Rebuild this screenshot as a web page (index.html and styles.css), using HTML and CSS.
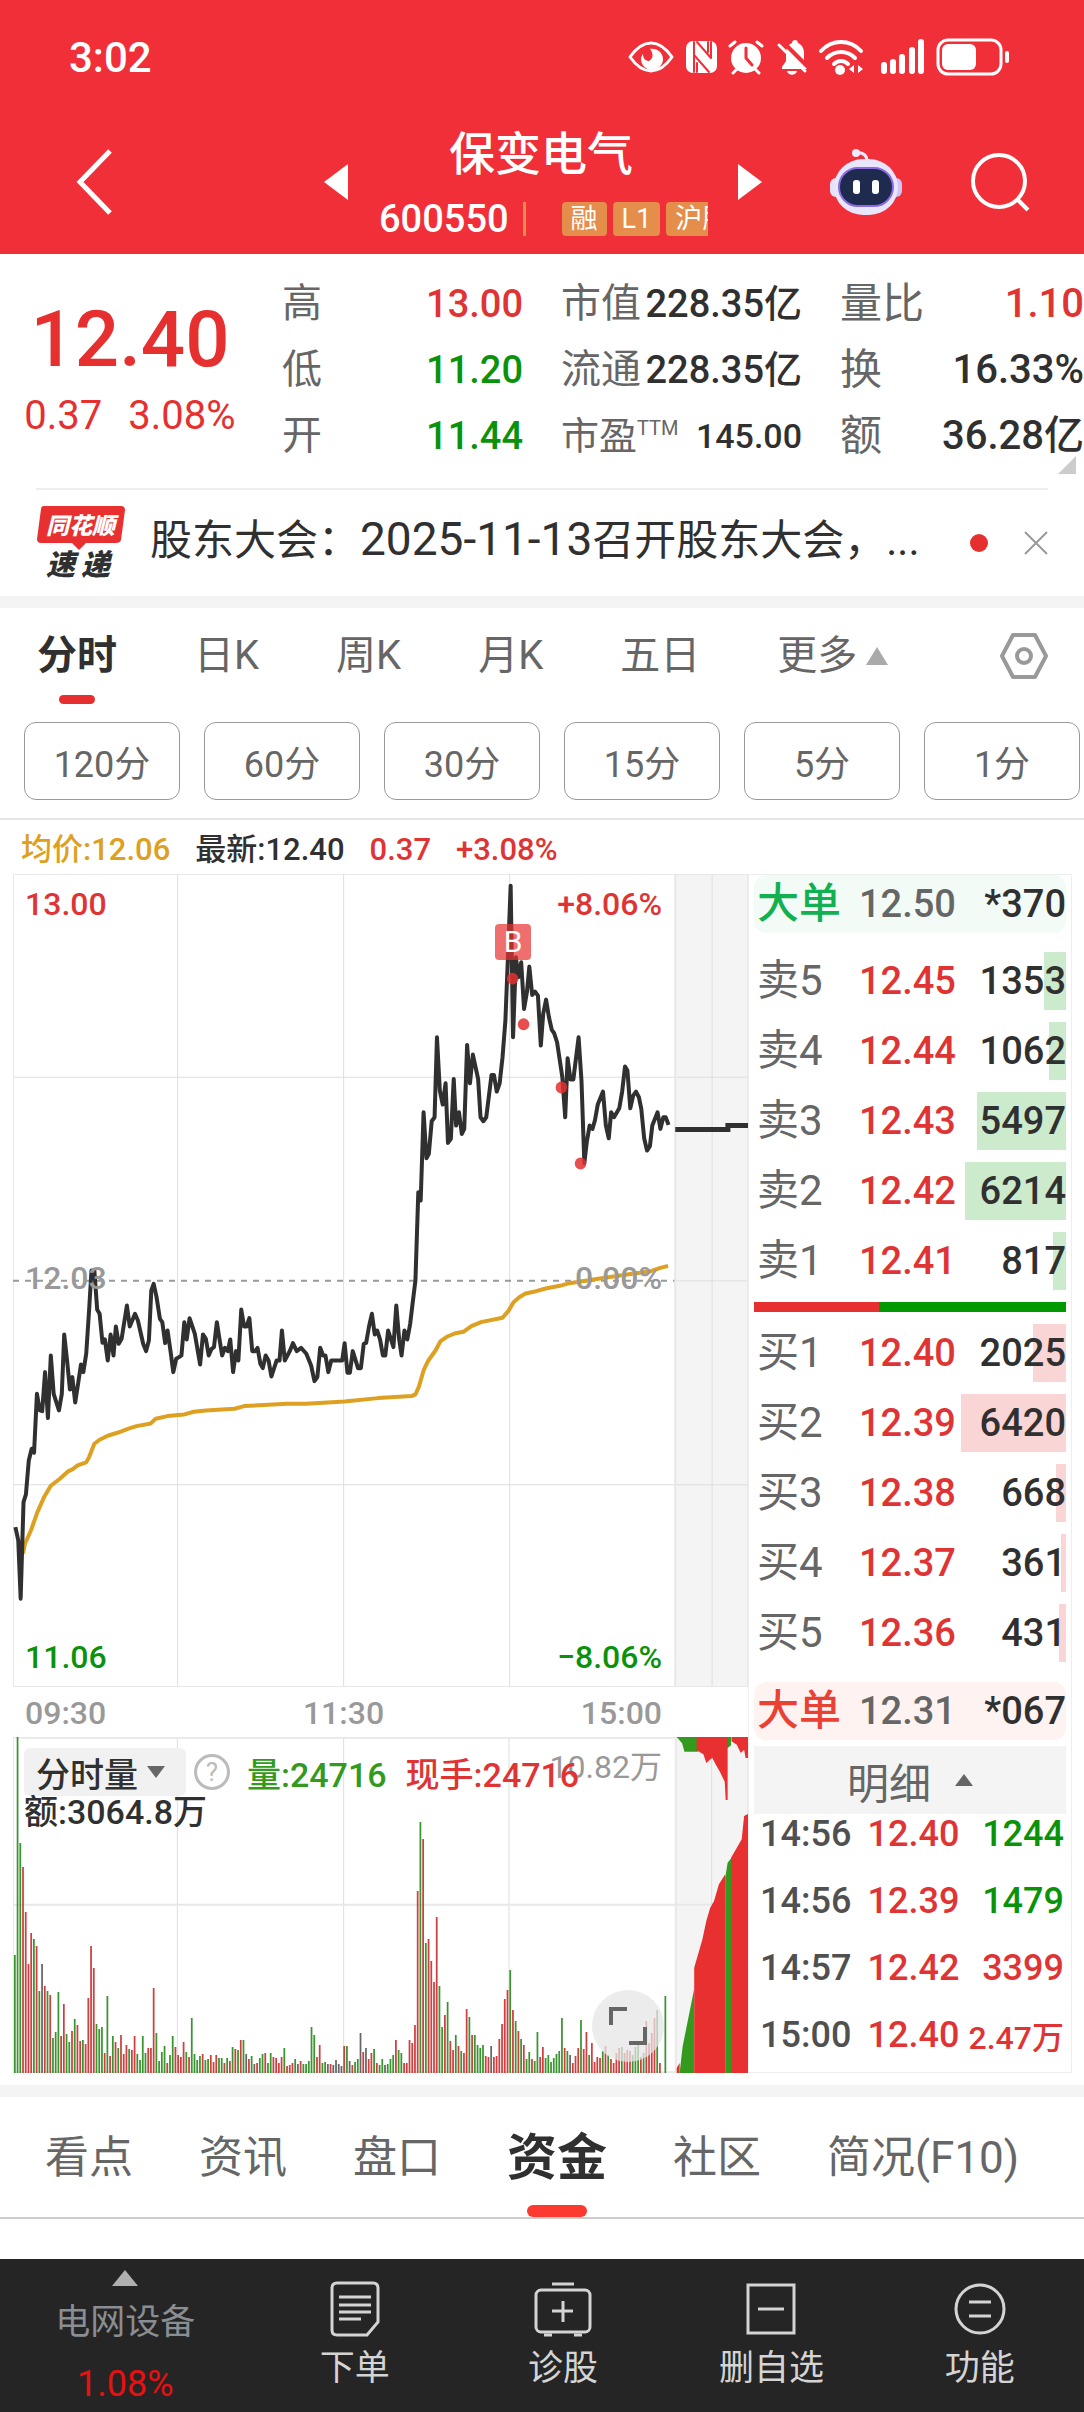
FILE: index.html
```html
<!DOCTYPE html>
<html lang="zh-CN">
<head>
	<meta charset="UTF-8">
	<meta name="viewport" content="width=device-width, initial-scale=1">
	<title>保变电气 600550</title>
	<link rel="stylesheet" href="styles.css">
</head>
<body>
	<header class="header">
		<div class="status">
			<span class="clock">3:02</span>
			<svg class="status-icons" width="386" height="40" viewBox="0 0 386 40" fill="none" stroke="#fff" stroke-width="3" stroke-linecap="round" stroke-linejoin="round">
				<!-- eye -->
				<path d="M2 20C9 10 16 6 23 6s14 4 21 14c-7 10-14 14-21 14S9 30 2 20z"/>
				<path d="M22 12c7-1 13 4 13 10s-5 11-11 11-11-5-11-11c0-2 1-4 2-5 0 5 3 7 6 7 4-2 5-7 1-12z" fill="#fff" stroke="none"/>
				<!-- nfc -->
				<rect x="58" y="4" width="31" height="32" rx="7" fill="#fff" stroke="none"/>
				<path d="M66 5v30M69 5l14 16V5M66 18l15 17M69 26v9M80 5v10" stroke="#f12f38" stroke-width="2"/>
				<!-- alarm -->
				<circle cx="118" cy="21" r="15" fill="#fff" stroke="none"/>
				<path d="M102 9l5-4M134 9l-5-4M109 32l-4 4M127 32l4 4"/>
				<path d="M118 11v10l6 7" stroke="#f12f38"/>
				<!-- bell off -->
				<path d="M154 32v-2l4-6V17c0-8 4-10 6-11 0-4 6-4 6 0 4 2 6 5 6 11v7l4 8zM159 34h10c-1 5-9 5-10 0z" fill="#fff" stroke="none"/>
				<path d="M155 5l26 26" stroke="#f12f38" stroke-width="4"/>
				<path d="M151 8l26 26"/>
				<!-- wifi -->
				<path d="M193 14c11-12 29-12 40 0M199 21c8-8 20-8 28 0M206 27c4-4 10-4 14 0" stroke-width="4"/>
				<circle cx="212" cy="33" r="5" fill="#fff" stroke="none"/>
				<path d="M226 28v8l-5-4zM230 28v8l5-4z" fill="#fff" stroke="none"/>
				<!-- signal -->
				<path d="M256 28v6M265 25v9M274 20v14M284 13v21M293 5v29" stroke-width="6"/>
				<!-- battery -->
				<rect x="310" y="3" width="63" height="34" rx="10"/>
				<rect x="314" y="7" width="34" height="26" rx="6" fill="#fff" stroke="none"/>
				<path d="M379 16v8" stroke-width="4"/>
			</svg>
		</div>
		<div class="title-bar">
			<button class="icon-btn back" aria-label="返回">
				<svg width="38" height="66" viewBox="0 0 38 66" fill="none" stroke="#fff" stroke-width="5"><path d="M35 2L5 33l30 31"/></svg>
			</button>
			<button class="icon-btn" aria-label="上一只">
				<svg width="24" height="36"><path d="M24 0v36L0 18z" fill="#fff"/></svg>
			</button>
			<div class="stock">
				<h1>保变电气</h1>
				<div class="stock-sub">
					<span class="code">600550</span>
					<i class="bar"></i>
					<span class="tags"><b>融</b><b>L1</b><b>沪股通</b></span>
				</div>
			</div>
			<button class="icon-btn" aria-label="下一只">
				<svg width="24" height="36"><path d="M0 0v36l24-18z" fill="#fff"/></svg>
			</button>
			<button class="icon-btn robot" aria-label="智能助手">
				<svg width="72" height="66" viewBox="0 0 72 66">
					<path d="M26 4c8-1 11 3 11 8" fill="none" stroke="#efeafc" stroke-width="3"/>
					<circle cx="26" cy="4" r="4" fill="#efeafc"/>
					<rect x="0" y="29" width="12" height="19" rx="6" fill="#e6e0fa"/>
					<rect x="60" y="29" width="12" height="19" rx="6" fill="#cfc4f4"/>
					<rect x="4" y="10" width="64" height="56" rx="29" fill="#e9e5fb"/>
					<rect x="9" y="19" width="54" height="38" rx="19" fill="#1f2a4f" stroke="#8a6be0" stroke-width="2"/>
					<rect x="23" y="31" width="7" height="14" rx="3" fill="#fff"/>
					<rect x="42" y="31" width="7" height="14" rx="3" fill="#fff"/>
				</svg>
			</button>
			<button class="icon-btn search" aria-label="搜索">
				<svg width="60" height="60" viewBox="0 0 60 60" fill="none" stroke="#fff" stroke-width="4"><circle cx="29" cy="29" r="26"/><path d="M48 48l10 10"/></svg>
			</button>
		</div>
	</header>

	<section class="quote">
		<div class="price">
			<strong>12.40</strong>
			<p><span>0.37</span><span>3.08%</span></p>
		</div>
		<dl>
			<div><dt>高</dt><dd class="up">13.00</dd></div>
			<div><dt>低</dt><dd class="down">11.20</dd></div>
			<div><dt>开</dt><dd class="down">11.44</dd></div>
		</dl>
		<dl>
			<div><dt>市值</dt><dd>228.35亿</dd></div>
			<div><dt>流通</dt><dd>228.35亿</dd></div>
			<div class="small"><dt>市盈<sup>TTM</sup></dt><dd>145.00</dd></div>
		</dl>
		<dl class="wide">
			<div><dt>量比</dt><dd class="up">1.10</dd></div>
			<div><dt>换</dt><dd>16.33%</dd></div>
			<div><dt>额</dt><dd>36.28亿</dd></div>
		</dl>
		<i class="corner"></i>
	</section>

	<section class="news">
		<svg class="news-logo" width="90" height="76" viewBox="0 0 90 76">
			<path d="M8 1h77q4 0 4 4l-4 30q-1 3-5 3H50l-7 7-7-7H5q-4 0-4-4L5 4q0-3 3-3z" fill="#e83030"/>
			<text x="10" y="29" class="logo-top">同花顺</text>
			<text x="10" y="70" class="logo-bottom">速</text>
			<text x="45" y="70" class="logo-bottom">递</text>
		</svg>
		<a href="#" class="news-text">股东大会：<span>2025-11-13</span>召开股东大会，...</a>
		<i class="dot"></i>
		<button class="icon-btn" aria-label="关闭">
			<svg width="24" height="24" fill="none" stroke="#999" stroke-width="2"><path d="M1 1l22 22M23 1L1 23"/></svg>
		</button>
	</section>

	<nav class="period">
		<a href="#" class="active">分时</a>
		<a href="#">日K</a>
		<a href="#">周K</a>
		<a href="#">月K</a>
		<a href="#">五日</a>
		<a href="#">更多<svg width="22" height="18"><path d="M11 0l11 18H0z" fill="#aaa"/></svg></a>
		<button class="icon-btn setting" aria-label="设置">
			<svg width="48" height="46" viewBox="0 0 48 46" fill="none" stroke="#999" stroke-width="4" stroke-linejoin="round"><path d="M13 2h22l11 21-11 21H13L2 23z"/><circle cx="24" cy="23" r="7"/></svg>
		</button>
	</nav>
	<div class="minutes">
		<button>120分</button>
		<button>60分</button>
		<button>30分</button>
		<button>15分</button>
		<button>5分</button>
		<button>1分</button>
	</div>

	<p class="info">
		<span class="avg">均价:12.06</span>
		<span>最新:12.40</span>
		<span class="up">0.37</span>
		<span class="up">+3.08%</span>
	</p>

	<main class="board">
		<div class="charts">
			<div class="chart">
				<svg class="plot" viewBox="27 40 1536 2440" preserveAspectRatio="none">
					<rect x="1409" y="40" width="154" height="2440" fill="#f4f4f4"/>
					<path class="grid" d="M371 40V2480M718 40V2480M1065 40V2480M1488 40V2480M27 650H1563M27 1873H1563M1409 1261H1563"/>
					<path class="frame" d="M27 40H1563V2480H27zM1411 40V2480"/>
					<path class="zero" d="M27 1261H1409"/>
					<polyline id="avg-line" class="avg-line"/>
					<polyline id="price-line" class="price-line"/>
					<path class="auction" d="M1411 807H1521V795H1563"/>
					<g class="deals">
						<ellipse cx="1071" cy="354" rx="12" ry="18"/>
						<ellipse cx="1094" cy="491" rx="12" ry="18"/>
						<ellipse cx="1173" cy="681" rx="12" ry="18"/>
						<ellipse cx="1213" cy="909" rx="12" ry="18"/>
					</g>
				</svg>
				<span class="label top left up">13.00</span>
				<span class="label top right up">+8.06%</span>
				<span class="label middle left">12.03</span>
				<span class="label middle right">0.00%</span>
				<span class="label bottom left down">11.06</span>
				<span class="label bottom right down">−8.06%</span>
				<span class="buy-flag">B</span>
			</div>
			<div class="times"><span>09:30</span><span>11:30</span><span>15:00</span></div>
			<div class="volume">
				<svg class="plot" viewBox="27 108 1516 1008" preserveAspectRatio="none">
					<rect x="1394" y="108" width="149" height="1008" fill="#f4f4f4"/>
					<path class="grid" d="M366 108V1116M709 108V1116M1050 108V1116M1468 108V1116"/>
					<path class="frame" d="M27 110H1543V1114H27zM27 611H1543M1394 108V1116"/>
					<g id="vol-bars"></g>
					<path fill="#339a1e" d="M1396 108h44v44h-28l-5-25zM1498 108h10v25l-10 12zM1402 1116l6-78 24-175v253zM1496 1116V530l5-45 8-15v646z"/>
					<path fill="#e83030" d="M1437 108h64v189h-4l-2-55-10-30-8-20-8-22-12 16-6-26-14-12zM1509 108h34v63h-5l-3-25-7 10-8-25-11-10zM1396 1116v-15l6-15v30zM1432 1116V800l7-35 10-50 8-55 8-40 8-20 10-50 13-30v596zM1508 1116V470l12-30 10-25 5-70 8-6v777z"/>
				</svg>
				<span class="label vol-max">10.82万</span>
				<div class="vol-head">
					<button class="vol-select">分时量<svg width="18" height="12"><path d="M0 0h18L9 12z" fill="#666"/></svg></button>
					<span class="help">?</span>
					<span class="vol-now">量:24716</span>
					<span class="up">现手:24716</span>
				</div>
				<p class="amount">额:3064.8万</p>
				<button class="expand" aria-label="全屏">
					<svg width="38" height="38" fill="none" stroke="#666" stroke-width="4"><path d="M2 18V2h16M36 20v16H20"/></svg>
				</button>
			</div>
		</div>

		<aside class="panel">
			<div class="row big sell-big"><span class="name">大单</span><span>12.50</span><span class="qty">*370</span></div>
			<div id="sell"></div>
			<div class="ratio"></div>
			<div id="buy"></div>
			<div class="row big buy-big"><span class="name">大单</span><span>12.31</span><span class="qty">*067</span></div>
			<button class="detail-btn">明细<svg width="18" height="12"><path d="M0 12h18L9 0z" fill="#666"/></svg></button>
			<table class="detail">
				<tr><td>14:56</td><td class="up">12.40</td><td class="down">1244</td></tr>
				<tr><td>14:56</td><td class="up">12.39</td><td class="down">1479</td></tr>
				<tr><td>14:57</td><td class="up">12.42</td><td class="up">3399</td></tr>
				<tr><td>15:00</td><td class="up">12.40</td><td class="up wan">2.47万</td></tr>
			</table>
		</aside>
	</main>

	<nav class="sections">
		<a href="#">看点</a>
		<a href="#">资讯</a>
		<a href="#">盘口</a>
		<a href="#" class="active">资金</a>
		<a href="#">社区</a>
		<a href="#">简况(F10)</a>
	</nav>

	<footer class="toolbar">
		<button class="sector">
			<svg width="26" height="16"><path d="M13 0l13 16H0z" fill="#b0b0b0"/></svg>
			<span>电网设备</span>
			<em>1.08%</em>
		</button>
		<button>
			<svg width="50" height="56" viewBox="0 0 50 56"><path d="M7 2h36q5 0 5 5v34L37 54H7q-5 0-5-5V7q0-5 5-5zM9 16h32M9 24h32M9 31h32M9 38h22"/></svg>
			<span>下单</span>
		</button>
		<button>
			<svg width="58" height="56" viewBox="0 0 58 56"><rect x="2" y="9" width="54" height="42" rx="5"/><path d="M18 3h22M10 54h8M40 54h8M29 20v21M18 30h21"/></svg>
			<span>诊股</span>
		</button>
		<button>
			<svg width="50" height="56" viewBox="0 0 50 56"><rect x="2" y="4" width="46" height="48"/><path d="M12 28h26"/></svg>
			<span>删自选</span>
		</button>
		<button>
			<svg width="52" height="56" viewBox="0 0 52 56"><circle cx="26" cy="28" r="24"/><path d="M15 21h22M15 35h22"/></svg>
			<span>功能</span>
		</button>
	</footer>
	<script src="main.js"></script>
</body>
</html>
```
FILE: styles.css
```css
* {
	box-sizing: border-box;
}
body {
	margin: 0;
	background: #fff;
	color: #303030;
	font-family: Roboto, "Noto Sans CJK SC", sans-serif;
	font-size: 38px;
}
h1, p, dl, dd {
	margin: 0;
}
a {
	color: inherit;
	text-decoration: none;
}
button {
	margin: 0;
	padding: 0;
	border: 0;
	background: none;
	color: inherit;
	font: inherit;
}
svg {
	display: block;
}
.icon-btn {
	display: flex;
	flex: none;
}
.up {
	color: #e03434;
}
.down {
	color: #0a930a;
}

/* header */
.header {
	height: 254px;
	background: #f12f38;
	color: #fff;
}
.status {
	display: flex;
	justify-content: space-between;
	align-items: center;
	height: 114px;
	padding: 0 70px 0 69px;
}
.clock {
	font-size: 42px;
	font-weight: 500;
}
.title-bar {
	display: flex;
	align-items: center;
	height: 136px;
	padding: 0 54px 0 75px;
}
.title-bar .back {
	margin-right: auto;
}
.stock {
	width: 390px;
	padding-left: 31px;
}
.stock h1 {
	margin-right: 35px;
	font-size: 46px;
	font-weight: 500;
	line-height: 74px;
	text-align: center;
}
.stock-sub {
	display: flex;
	align-items: center;
	height: 56px;
}
.code {
	font-weight: 500;
}
.bar {
	width: 3px;
	height: 34px;
	margin: 0 36px 0 14px;
	background: #e58d4a;
}
.tags {
	display: flex;
	gap: 6px;
	width: 146px;
	overflow: hidden;
}
.tags b {
	flex: none;
	padding: 0 9px;
	border-radius: 4px;
	background: #e58d4a;
	font-size: 27px;
	font-weight: 400;
	line-height: 34px;
}
.robot {
	margin-left: 68px;
}
.search {
	margin-left: 68px;
}

/* quote */
.quote {
	position: relative;
	display: grid;
	grid-template-columns: 244fr 241fr 241fr 244fr;
	column-gap: 38px;
	height: 234px;
	padding-top: 17px;
}
.price {
	padding: 27px 0 0 16px;
	color: #e63030;
	text-align: center;
}
.price strong {
	display: block;
	font-size: 78px;
	font-weight: 500;
	line-height: 84px;
}
.price p {
	display: flex;
	justify-content: center;
	gap: 26px;
	font-size: 40px;
	line-height: 68px;
}
.quote dl div {
	display: flex;
	justify-content: space-between;
	height: 66px;
	line-height: 66px;
	white-space: nowrap;
}
.quote dt {
	color: #666;
	font-size: 40px;
}
.quote dd {
	font-weight: 500;
}
.quote .wide dt {
	font-size: 42px;
}
.quote .wide dd {
	font-size: 40px;
}
.quote .small dt {
	font-size: 38px;
}
.quote .small dd {
	font-size: 34px;
}
.quote sup {
	font-size: 20px;
	line-height: 0;
}
.corner {
	position: absolute;
	right: 8px;
	bottom: 14px;
	border-left: 18px solid transparent;
	border-bottom: 18px solid #ccc;
}

/* news */
.news {
	display: flex;
	align-items: center;
	height: 108px;
	margin: 0 36px;
	border-top: 2px solid #eee;
}
.news-logo {
	flex: none;
}
.logo-top {
	fill: #fff;
	font-size: 23px;
	font-style: italic;
	font-weight: 900;
}
.logo-bottom {
	fill: #303030;
	font-size: 29px;
	font-style: italic;
	font-weight: 900;
}
.news-text {
	flex: 1;
	margin-left: 24px;
	padding-bottom: 6px;
	font-size: 42px;
	line-height: 60px;
	white-space: nowrap;
}
.news-text span {
	font-size: 46px;
}
.dot {
	width: 18px;
	height: 18px;
	margin-right: 36px;
	border-radius: 50%;
	background: #e63030;
}

/* period tabs */
.period {
	display: flex;
	gap: 77px;
	height: 126px;
	padding: 0 36px 0 37px;
	border-top: 12px solid #f4f4f4;
	color: #666;
	font-size: 40px;
	line-height: 98px;
}
.period a {
	position: relative;
	display: flex;
	align-items: center;
	gap: 9px;
	height: 96px;
}
.period .active {
	color: #303030;
	font-weight: 700;
}
.period .active::after, .sections .active::after {
	content: "";
	position: absolute;
	left: 50%;
	bottom: 0;
	width: 36px;
	height: 9px;
	margin-left: -18px;
	border-radius: 5px;
	background: #e63030;
}
.setting {
	align-items: center;
	height: 96px;
	margin-left: auto;
}
.minutes {
	display: grid;
	grid-template-columns: repeat(6, 1fr);
	gap: 24px;
	height: 98px;
	padding: 0 4px 18px 24px;
	border-bottom: 2px solid #e6e6e6;
}
.minutes button {
	border: 1px solid #999;
	border-radius: 12px;
	color: #666;
	font-size: 36px;
}

/* charts */
.info {
	display: flex;
	gap: 25px;
	height: 54px;
	padding-left: 21px;
	font-size: 31px;
	font-weight: 500;
	line-height: 60px;
}
.avg {
	color: #dda020;
}
.board {
	display: grid;
	grid-template-columns: 735fr 324fr;
	padding: 0 12px 12px 13px;
}
.charts {
	min-width: 0;
}
.chart, .volume {
	position: relative;
	height: 813px;
}
.volume {
	height: 336px;
}
.plot {
	width: 100%;
	height: 100%;
}
.plot path, .plot polyline {
	vector-effect: non-scaling-stroke;
}
.grid {
	stroke: #dedede;
	stroke-width: 1px;
}
.frame {
	fill: none;
	stroke: #e8e8e8;
	stroke-width: 2px;
}
.zero {
	stroke: #999;
	stroke-width: 2px;
	stroke-dasharray: 6 6;
}
.price-line, .avg-line {
	fill: none;
	stroke: #303030;
	stroke-width: 4px;
	stroke-linejoin: round;
}
.avg-line {
	stroke: #dda020;
}
.auction {
	fill: none;
	stroke: #303030;
	stroke-width: 5px;
}
.deals {
	fill: #e63030;
	opacity: .85;
}
.label {
	position: absolute;
	font-size: 32px;
	font-weight: 500;
	line-height: 40px;
}
.top {
	top: 10px;
}
.middle {
	top: 384px;
	color: #999;
}
.bottom {
	bottom: 10px;
}
.left {
	left: 12px;
}
.right {
	right: 86px;
}
.buy-flag {
	position: absolute;
	top: 50px;
	left: 482px;
	width: 36px;
	height: 36px;
	border-radius: 4px;
	background: rgba(232, 48, 48, .7);
	color: #fff;
	font-size: 30px;
	line-height: 36px;
	text-align: center;
}
.times {
	display: flex;
	justify-content: space-between;
	height: 50px;
	padding: 0 86px 0 12px;
	color: #999;
	font-size: 32px;
	font-weight: 500;
	line-height: 52px;
}
.vol-max {
	top: 10px;
	right: 86px;
	color: #999;
	font-weight: 400;
}
.vol-head {
	position: absolute;
	top: 11px;
	left: 11px;
	display: flex;
	align-items: center;
	height: 48px;
	font-size: 34px;
	font-weight: 500;
	white-space: nowrap;
}
.vol-select {
	display: flex;
	align-items: center;
	gap: 9px;
	width: 162px;
	height: 48px;
	padding-left: 12px;
	border-radius: 6px;
	background: #f1f1f1;
}
.help {
	width: 36px;
	height: 36px;
	margin: 0 17px 0 8px;
	border: 3px solid #bbb;
	border-radius: 50%;
	color: #bbb;
	font-size: 26px;
	font-weight: 400;
	line-height: 30px;
	text-align: center;
}
.vol-now {
	margin-right: 19px;
	color: #339a1e;
}
.amount {
	position: absolute;
	top: 54px;
	left: 11px;
	font-size: 34px;
	font-weight: 500;
	line-height: 42px;
}
.expand {
	position: absolute;
	right: 84px;
	bottom: 11px;
	display: flex;
	align-items: center;
	justify-content: center;
	width: 72px;
	height: 72px;
	border-radius: 50%;
	background: rgba(230, 230, 230, .75);
}

/* order book */
.panel {
	padding: 0 5px;
	border: 1px solid #eee;
}
.row {
	position: relative;
	display: flex;
	justify-content: space-between;
	align-items: center;
	height: 58px;
	margin-bottom: 12px;
	padding-left: 3px;
	font-weight: 500;
	line-height: 56px;
}
.row span {
	position: relative;
}
.row .name {
	width: 100px;
	color: #666;
	font-size: 42px;
	font-weight: 400;
}
.row .qty {
	width: 108px;
	color: #303030;
	text-align: right;
}
.row i {
	position: absolute;
	top: 0;
	right: 0;
	height: 58px;
}
#sell i {
	background: #cceacc;
}
#buy i {
	background: #fad5d5;
}
.big {
	border-radius: 12px;
	color: #666;
}
.big .name {
	font-weight: 500;
}
.sell-big {
	margin-bottom: 19px;
	background: #f2fbf6;
}
.sell-big .name {
	color: #12b050;
}
.buy-big {
	margin: 20px 0 6px;
	background: #fff3f2;
}
.buy-big .name {
	color: #e94235;
}
.ratio {
	height: 10px;
	margin-bottom: 12px;
	background: linear-gradient(90deg, #e63030 40%, #090 40%);
}
.detail-btn {
	display: flex;
	align-items: center;
	justify-content: center;
	gap: 24px;
	width: 100%;
	height: 68px;
	background: #f4f4f4;
	color: #666;
	font-size: 42px;
}
.detail {
	width: 100%;
	border-collapse: collapse;
	margin-top: -14px;
	font-size: 36px;
	font-weight: 500;
}
.detail td {
	height: 67px;
	padding: 0 2px 0 6px;
	color: #505050;
}
.detail td + td {
	padding-left: 0;
	text-align: right;
}
.detail .up {
	color: #e03434;
}
.detail .down {
	color: #0a930a;
}
.detail .wan {
	font-size: 32px;
}

/* bottom */
.sections {
	display: flex;
	align-items: center;
	gap: 66px;
	height: 134px;
	padding-left: 45px;
	border-top: 12px solid #f4f4f4;
	border-bottom: 2px solid #ccc;
	color: #666;
	font-size: 44px;
	white-space: nowrap;
}
.sections a {
	position: relative;
	height: 120px;
	line-height: 122px;
}
.sections .active {
	color: #303030;
	font-size: 50px;
	font-weight: 700;
}
.sections .active::after {
	width: 60px;
	height: 12px;
	margin-left: -30px;
	border-radius: 6px;
	background: #fc3a30;
}
.toolbar {
	display: grid;
	grid-template-columns: 250fr repeat(4, 208fr);
	height: 153px;
	margin-top: 40px;
	background: #252525;
	color: #d4d4d4;
	font-size: 35px;
}
.toolbar button {
	display: flex;
	flex-direction: column;
	align-items: center;
	padding-top: 22px;
}
.toolbar svg {
	fill: none;
	stroke: #d4d4d4;
	stroke-width: 3px;
}
.toolbar span {
	margin-top: 4px;
	line-height: 56px;
}
.toolbar .sector {
	padding-top: 11px;
}
.toolbar .sector svg {
	stroke: none;
}
.toolbar .sector span {
	margin-top: 9px;
	color: #888e92;
}
.sector em {
	color: #e81010;
	font-size: 36px;
	font-style: normal;
	line-height: 66px;
}
```
FILE: main.js
```js
var priceData = "32,2000 38,2040 43,2215 49,1925 54,1902 60,1800 66,1765 71,1777 77,1600 83,1650 88,1652 94,1535 100,1673 106,1485 112,1600 123,1650 129,1600 134,1422 140,1500 146,1587 151,1550 157,1626 163,1570 169,1512 174,1535 180,1480 186,1350 191,1230 197,1230 203,1348 208,1360 214,1447 219,1437 225,1500 231,1422 237,1485 242,1398 248,1450 254,1435 265,1335 271,1398 282,1360 288,1380 299,1450 305,1472 311,1440 316,1290 321,1270 327,1310 334,1375 339,1385 345,1448 350,1410 356,1470 362,1535 368,1495 374,1490 379,1485 385,1385 390,1437 396,1373 407,1420 418,1512 424,1422 430,1435 436,1485 442,1465 447,1460 453,1385 459,1440 464,1485 470,1462 476,1472 481,1437 487,1535 493,1472 498,1500 504,1347 510,1398 515,1398 521,1373 527,1472 533,1472 538,1462 544,1510 549,1523 555,1485 561,1500 567,1548 578,1500 584,1500 589,1410 595,1500 606,1470 612,1448 620,1472 629,1462 640,1480 650,1515 657,1562 663,1550 669,1462 675,1485 680,1485 686,1535 692,1500 715,1500 720,1448 726,1537 731,1537 737,1472 748,1523 754,1523 760,1450 765,1447 771,1398 777,1360 783,1422 788,1410 794,1437 800,1485 805,1485 811,1410 822,1460 828,1335 834,1437 839,1485 845,1410 851,1437 857,1390 862,1330 868,1260 874,995 879,1020 885,755 891,893 896,880 902,782 908,770 913,530 919,690 925,732 931,668 936,847 942,835 948,655 953,795 959,755 965,820 970,805 976,553 982,668 988,582 999,655 1004,770 1010,782 1016,770 1027,643 1032,643 1038,693 1044,668 1050,590 1056,480 1061,300 1067,75 1072,530 1078,290 1083,350 1089,305 1095,445 1101,395 1106,318 1112,403 1118,393 1124,405 1130,555 1135,460 1141,417 1147,470 1153,508 1158,518 1164,545 1175,650 1181,770 1186,593 1192,657 1198,657 1209,530 1215,660 1221,908 1226,845 1232,795 1238,805 1243,780 1249,732 1260,693 1266,795 1272,833 1277,755 1283,770 1294,743 1300,693 1306,618 1311,630 1317,743 1323,705 1329,693 1335,710 1340,745 1346,833 1352,870 1358,857 1363,795 1374,755 1380,805 1386,770 1391,770 1397,793";
var avgData = "48,2080 52,2050 65,2008 78,1955 92,1910 106,1876 125,1855 143,1832 152,1826 162,1815 180,1806 186,1790 197,1750 208,1738 225,1726 245,1717 270,1704 285,1697 315,1689 325,1675 350,1667 385,1662 405,1654 430,1650 490,1645 510,1637 600,1630 640,1630 720,1623 790,1613 860,1607 868,1602 875,1580 885,1530 895,1500 910,1470 920,1443 935,1428 950,1419 968,1414 985,1397 1005,1385 1050,1372 1062,1352 1073,1325 1085,1310 1098,1299 1115,1294 1140,1284 1170,1276 1190,1268 1250,1255 1310,1242 1360,1232 1380,1222 1396,1216";

// one bar per minute, height and colour (r up, g down, k flat)
var volData = "118g 336g 230g 206r 161r 109r 140r 134g 127r 82g 109k 87r 82g 78r 35g 41g 81g 37r 69r 39g 31g 42r 54g 48r 32r 33g 29r 75r 127r 105r 49g 44g 46g 20r 77g 17r 37g 31r 25g 38r 19r 28r 24g 23r 37r 19g 13g 37g 20g 25r 25r 85r 40g 12g 21g 27g 10r 18g 37g 26r 18r 16r 31r 21g 16r 55g 19g 13g 17g 19r 13g 14g 18r 11r 18r 15g 15g 10r 15g 12r 26g 24r 23g 33r 33g 19k 14r 17g 9k 10r 15g 19g 20r 10g 20g 16r 15r 10r 16r 25g 7r 8r 10r 14g 9k 12r 9g 9g 12g 46g 38g 16r 28r 10g 11g 9k 9r 8k 13k 9k 7k 27r 27g 12k 8r 11g 14g 40k 21r 25k 14r 20r 24g 10r 8g 14g 8k 9g 14g 18g 33r 23g 20g 10r 10r 33r 30r 48r 182r 251g 234r 130g 134r 112r 91r 156r 87g 46g 58r 71g 32r 23r 38g 27r 22g 20r 64r 56g 38r 38g 28g 25g 28g 17r 16r 27k 16r 17r 34r 49r 74r 83r 103g 63r 52g 42r 34g 28r 14g 21g 14r 12g 41g 16r 26r 15g 18g 11g 15g 19g 22g 55g 25r 22g 18k 10r 17r 25r 53g 24r 41r 18g 30r 11r 16r 15r 22g 27r 18g 14r 10r 20r 25r 26g 20r 23r 22r 18g 26g 30g 16r 20g 52r 30r 40r 55r 63g 10r 0k 77g";
var volColor = {r: "#cf3f3f", g: "#3a9430", k: "#666"};

var sellData = [["卖5", "12.45", 1353, 22], ["卖4", "12.44", 1062, 17], ["卖3", "12.43", 5497, 89], ["卖2", "12.42", 6214, 101], ["卖1", "12.41", 817, 13]];
var buyData = [["买1", "12.40", 2025, 33], ["买2", "12.39", 6420, 105], ["买3", "12.38", 668, 10], ["买4", "12.37", 361, 5], ["买5", "12.36", 431, 7]];

function drawVolume() {
	var html = "";
	volData.split(" ").forEach(function(item, i) {
		var h = parseInt(item) * 3;
		var x = 29 + i * 5.614;
		html += '<rect x="' + x + '" y="' + (1116 - h) + '" width="3.6" height="' + h + '" fill="' + volColor[item.slice(-1)] + '"/>';
	});
	document.getElementById("vol-bars").innerHTML = html;
}
function drawRows(id, data) {
	document.getElementById(id).innerHTML = data.map(function(d) {
		return '<div class="row"><i style="width:' + d[3] + 'px"></i><span class="name">' + d[0] + '</span><span class="up">' + d[1] + '</span><span class="qty">' + d[2] + '</span></div>';
	}).join("");
}

document.getElementById("price-line").setAttribute("points", priceData);
document.getElementById("avg-line").setAttribute("points", avgData);
drawVolume();
drawRows("sell", sellData);
drawRows("buy", buyData);
```
